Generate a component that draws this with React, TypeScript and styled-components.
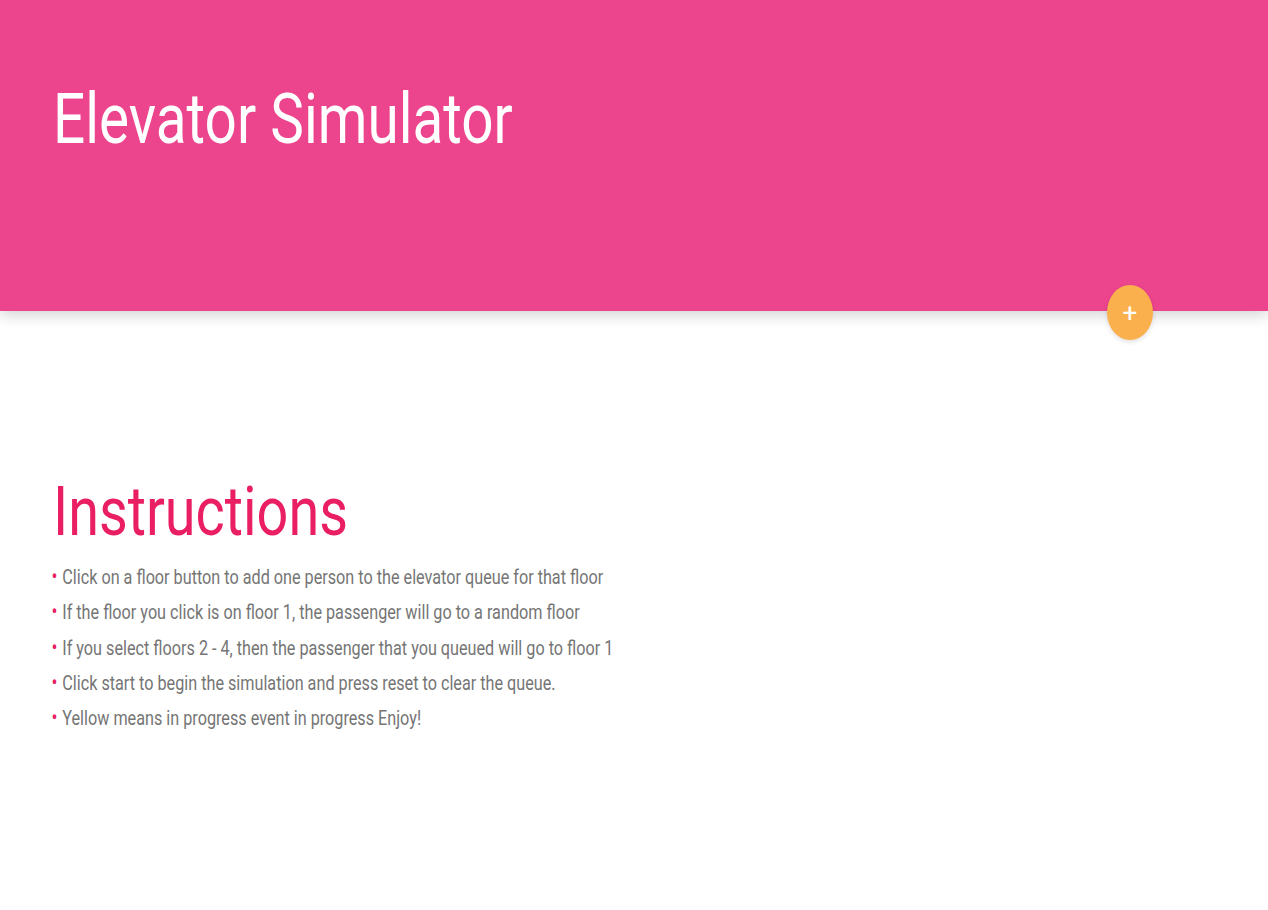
import React from "react";
import styled, { createGlobalStyle } from "styled-components";

const Global = createGlobalStyle`
  html, body { margin: 0; padding: 0; background: #fff; }
  body { font-family: Roboto, "Noto Sans", Arial, sans-serif; }
`;

const Header = styled.header`
  position: relative;
  height: 311px;
  background: #ec458d;
  box-shadow: 0 4px 14px rgba(0, 0, 0, 0.18);
  padding: 78px 0 0 53px;
  box-sizing: border-box;
`;

const Squeeze = styled.div<{ $sx: number }>`
  display: block;
  width: max-content;
  transform: scaleX(${(p) => p.$sx});
  transform-origin: left top;
  white-space: nowrap;
`;

const Title = styled.h1`
  margin: 0;
  font-size: 70px;
  line-height: 82px;
  font-weight: 400;
  color: #fff;
`;

const Fab = styled.button`
  position: absolute;
  left: 1107px;
  top: 285px;
  width: 46px;
  height: 55px;
  border-radius: 50%;
  border: none;
  background: #fbb04e;
  color: #fff;
  font-family: Roboto, sans-serif;
  font-size: 26px;
  line-height: 1;
  padding: 0;
  display: flex;
  align-items: center;
  justify-content: center;
  box-shadow: 0 2px 5px rgba(0, 0, 0, 0.12);
`;

const Main = styled.main`
  padding: 162px 0 0 53px;
`;

const Heading = styled.h2`
  margin: 0;
  font-size: 68px;
  line-height: 78px;
  font-weight: 400;
  color: #e91e63;
`;

const List = styled.ul`
  list-style: none;
  margin: 9px 0 0 -2px;
  padding: 0;
`;

const Item = styled.li`
  font-size: 20px;
  line-height: 35.25px;
  color: #757575;
  &::before {
    content: "•";
    color: #e91e63;
    margin-right: 6px;
    font-size: 22px;
    line-height: 0;
  }
`;

const items = [
  "Click on a floor button to add one person to the elevator queue for that floor",
  "If the floor you click is on floor 1, the passenger will go to a random floor",
  "If you select floors 2 - 4, then the passenger that you queued will go to floor 1",
  "Click start to begin the simulation and press reset to clear the queue.",
  "Yellow means in progress event in progress Enjoy!",
];

export default function App() {
  return (
    <>
      <Global />
      <Header>
        <Squeeze $sx={0.81}>
          <Title>Elevator Simulator</Title>
        </Squeeze>
        <Fab aria-label="add">+</Fab>
      </Header>
      <Main>
        <Squeeze $sx={0.82}>
          <Heading>Instructions</Heading>
        </Squeeze>
        <Squeeze $sx={0.81}>
          <List>
            {items.map((t) => (
              <Item key={t}>{t}</Item>
            ))}
          </List>
        </Squeeze>
      </Main>
    </>
  );
}
